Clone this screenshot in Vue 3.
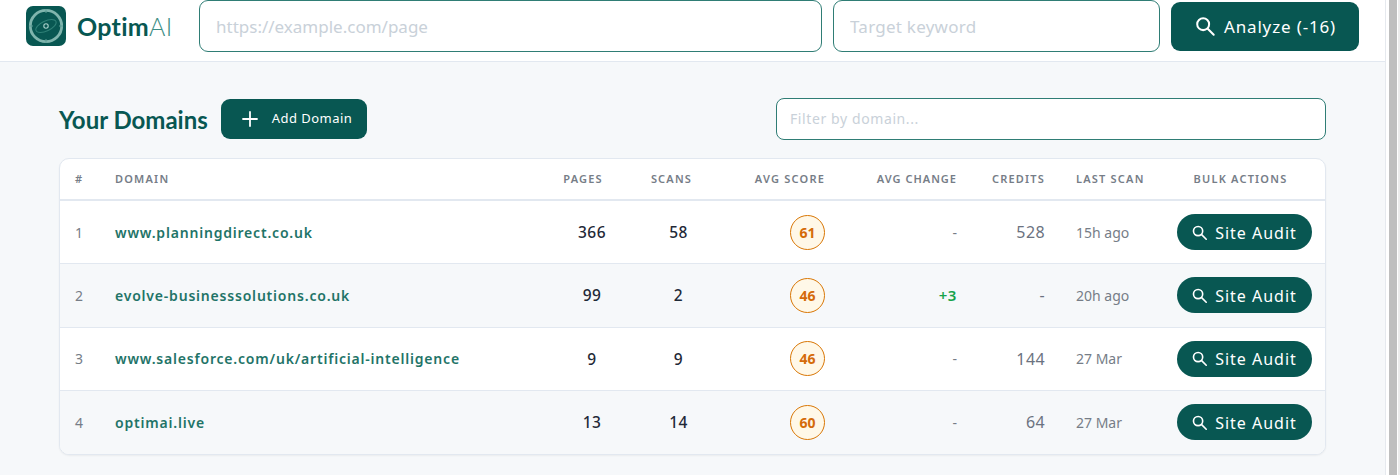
<script setup>
const rows = [
  { n: 1, domain: 'www.planningdirect.co.uk', pages: 366, scans: 58, score: 61, change: '-', credits: '528', last: '15h ago' },
  { n: 2, domain: 'evolve-businesssolutions.co.uk', pages: 99, scans: 2, score: 46, change: '+3', credits: '-', last: '20h ago' },
  { n: 3, domain: 'www.salesforce.com/uk/artificial-intelligence', pages: 9, scans: 9, score: 46, change: '-', credits: '144', last: '27 Mar' },
  { n: 4, domain: 'optimai.live', pages: 13, scans: 14, score: 60, change: '-', credits: '64', last: '27 Mar' },
]
</script>

<template>
  <div class="shell">
    <div class="page">
      <header class="topbar">
        <div class="brand">
          <svg class="logo" viewBox="0 0 40 40" width="40" height="40">
            <rect width="40" height="40" rx="7" fill="#085752" />
            <circle cx="20" cy="20" r="15.7" fill="none" stroke="#7fb5ad" stroke-width="2.8" />
            <path d="M20 3v4M20 33v4M3 20h4M33 20h4" stroke="#5f9f97" stroke-width="1" />
            <ellipse cx="20" cy="20" rx="11" ry="5" transform="rotate(-25 20 20)" fill="none" stroke="#2f8077" stroke-width="1" />
            <circle cx="20" cy="20" r="2.2" fill="none" stroke="#a9d0ca" stroke-width="1.1" />
          </svg>
          <span class="wordmark">Optim<span class="ai">AI</span></span>
        </div>
        <input class="field url" placeholder="https://example.com/page" />
        <input class="field keyword" placeholder="Target keyword" />
        <button class="analyze">
          <svg viewBox="0 0 24 24" width="22" height="22" fill="none" stroke="#fff" stroke-width="2.2" stroke-linecap="round">
            <circle cx="10" cy="10" r="6.5" />
            <path d="M15 15l6.5 6.5" />
          </svg>
          <span>Analyze (-16)</span>
        </button>
      </header>

      <main class="content">
        <div class="toolbar">
          <h1 class="title">Your Domains</h1>
          <button class="add">
            <svg viewBox="0 0 16 16" width="16" height="16" stroke="#fff" stroke-width="1.8" stroke-linecap="round">
              <path d="M8 1v14M1 8h14" />
            </svg>
            <span class="add-label">Add Domain</span>
          </button>
          <input class="filter" placeholder="Filter by domain..." />
        </div>

        <div class="card">
          <table>
            <colgroup>
              <col class="c-n" /><col class="c-domain" /><col class="c-pages" /><col class="c-scans" />
              <col class="c-score" /><col class="c-change" /><col class="c-credits" /><col class="c-last" /><col class="c-bulk" />
            </colgroup>
            <thead>
              <tr>
                <th>#</th>
                <th>DOMAIN</th>
                <th class="ctr h-pages">PAGES</th>
                <th class="ctr h-scans">SCANS</th>
                <th class="right">AVG SCORE</th>
                <th class="right h-change">AVG CHANGE</th>
                <th class="right">CREDITS</th>
                <th class="lastcol">LAST SCAN</th>
                <th class="ctr h-bulk">BULK ACTIONS</th>
              </tr>
            </thead>
            <tbody>
              <tr v-for="r in rows" :key="r.n">
                <td class="num">{{ r.n }}</td>
                <td class="domain">{{ r.domain }}</td>
                <td class="ctr count">{{ r.pages }}</td>
                <td class="ctr count">{{ r.scans }}</td>
                <td class="right"><span class="score">{{ r.score }}</span></td>
                <td class="right change" :class="{ up: r.change !== '-' }">{{ r.change }}</td>
                <td class="right credits">{{ r.credits }}</td>
                <td class="last lastcol">{{ r.last }}</td>
                <td class="ctr action">
                  <button class="audit">
                    <svg viewBox="0 0 24 24" width="17" height="17" fill="none" stroke="#fff" stroke-width="2.3" stroke-linecap="round">
                      <circle cx="10" cy="10" r="6.5" />
                      <path d="M15 15l6.5 6.5" />
                    </svg>
                    <span class="audit-label">Site Audit</span>
                  </button>
                </td>
              </tr>
            </tbody>
          </table>
        </div>
      </main>
    </div>
    <div class="scrollbar"><div class="thumb"></div></div>
  </div>
</template>

<style>
html, body { margin: 0; overflow: hidden; background: #fff; }
</style>

<style scoped>
.shell {
  display: flex;
  width: 1400px;
  height: 475px;
  overflow: hidden;
  font-family: "Noto Sans", sans-serif;
}
.page {
  width: 1386px;
  flex: none;
  background: #f6f8fa;
  border-right: 1px solid #e6e9ee;
  box-sizing: border-box;
}
.scrollbar {
  flex: 1;
  box-sizing: border-box;
  background: #fff;
  padding-left: 3px;
  border-right: 2px solid #ececec;
}
.thumb {
  width: 8px;
  height: 100%;
  background: #bfbfbf;
}
.topbar {
  display: flex;
  align-items: center;
  height: 62px;
  box-sizing: border-box;
  background: #fff;
  border-bottom: 1px solid #e2e8f0;
  padding: 0 25px 9px 26px;
}
.brand {
  display: flex;
  align-items: center;
  width: 173px;
  flex: none;
}
.logo { flex: none; }
.wordmark {
  margin-left: 11px;
  font-family: "Lato", sans-serif;
  font-size: 25px;
  font-weight: 700;
  letter-spacing: 0.3px;
  color: #085752;
}
.ai { font-weight: 300; color: #3c8d84; }
.field {
  height: 52px;
  box-sizing: border-box;
  border: 1px solid #2f7d75;
  border-radius: 9px;
  background: #fff;
  padding: 0 16px;
  font: 400 17px "Noto Sans", sans-serif;
  outline: none;
}
.field::placeholder, .filter::placeholder { color: #c9d1d9; opacity: 1; }
.url { width: 623px; margin-right: 11px; letter-spacing: 0; }
.keyword { width: 327px; margin-right: 11px; letter-spacing: 0.25px; }
.analyze {
  display: flex;
  align-items: center;
  justify-content: center;
  gap: 8px;
  width: 188px;
  height: 49px;
  border: 0;
  border-radius: 9px;
  background: #085752;
  color: #fff;
  font: 400 17px "Noto Sans", sans-serif;
  letter-spacing: 0.85px;
  padding: 0;
}
.content { padding: 36px 59px 0; }
.toolbar {
  display: flex;
  align-items: center;
  height: 42px;
  margin-bottom: 18px;
}
.title {
  margin: 0 13px 0 0;
  font-family: "Lato", sans-serif;
  font-size: 24px;
  font-weight: 700;
  color: #085752;
  white-space: nowrap;
}
.add {
  display: flex;
  align-items: center;
  gap: 14px;
  height: 40px;
  width: 146px;
  box-sizing: border-box;
  padding: 0 0 0 21px;
  border: 0;
  border-radius: 9px;
  background: #085752;
  color: #fff;
  font: 400 13px "Noto Sans", sans-serif;
  letter-spacing: 0.45px;
}
.add-label { padding-bottom: 2px; }
.filter {
  margin-left: auto;
  width: 550px;
  height: 42px;
  box-sizing: border-box;
  border: 1px solid #2f7d75;
  border-radius: 8px;
  background: #fff;
  padding: 0 13px 2px;
  font: 400 14px "Noto Sans", sans-serif;
  letter-spacing: 0.6px;
  outline: none;
}
.card {
  box-sizing: border-box;
  width: 1267px;
  border: 1px solid #e2e8f0;
  border-radius: 10px;
  overflow: hidden;
  background: #fff;
  box-shadow: 0 1px 2px rgba(0, 0, 0, 0.05);
}
table {
  width: 100%;
  table-layout: fixed;
  border-collapse: collapse;
}
.c-n { width: 55px; }
.c-domain { width: 434px; }
.c-pages { width: 86px; }
.c-scans { width: 87px; }
.c-score { width: 103px; }
.c-change { width: 132px; }
.c-credits { width: 88px; }
.c-last { width: 116px; }
.c-bulk { width: 164px; }
th {
  height: 41px;
  padding: 0 0 2px;
  box-sizing: border-box;
  border-bottom: 2px solid #e2e8f0;
  font-size: 11px;
  font-weight: 600;
  letter-spacing: 1.2px;
  color: #767d87;
  text-align: left;
  white-space: nowrap;
}
th:first-child, td:first-child { padding-left: 15px; }
td {
  height: 63.5px;
  padding: 0;
  box-sizing: border-box;
  border-bottom: 1px solid #e2e8f0;
  font-size: 15px;
  white-space: nowrap;
}
tr:last-child td { border-bottom: 0; height: 63px; }
tbody tr:nth-child(even) td { background: #f6f8fa; }
.ctr { text-align: center; }
.right { text-align: right; }
.lastcol { padding-left: 31px; }
th.h-pages { padding-right: 18px; }
th.h-scans { padding-right: 14px; }
th.h-change { letter-spacing: 1px; }
th.h-bulk { padding-right: 5px; }
td.action { padding-left: 2px; }
.num { color: #767d87; font-size: 14px; }
.domain {
  color: #1f7468;
  font-weight: 600;
  font-size: 14px;
  letter-spacing: 0.8px;
}
.count { color: #1f2937; font-size: 15.5px; font-weight: 500; letter-spacing: 0.5px; }
.score {
  display: inline-flex;
  align-items: center;
  justify-content: center;
  width: 35px;
  height: 35px;
  box-sizing: border-box;
  border: 1px solid #d97706;
  border-radius: 50%;
  background: #fff8e8;
  color: #d56b0a;
  font-size: 14px;
  font-weight: 700;
}
.change { color: #767d87; font-size: 14px; }
.change.up { color: #16a34a; font-weight: 600; font-size: 15px; letter-spacing: 0.6px; }
.credits { color: #6b7280; font-size: 16px; letter-spacing: 0.4px; }
.last { color: #767d87; font-size: 14px; }
.audit {
  display: inline-flex;
  align-items: center;
  justify-content: center;
  gap: 7px;
  width: 135px;
  height: 36px;
  padding: 0;
  border: 0;
  border-radius: 18px;
  background: #085752;
  color: #fff;
  font: 400 16px "Noto Sans", sans-serif;
  letter-spacing: 1px;
  vertical-align: middle;
}
.audit-label { padding-top: 1px; }
</style>
